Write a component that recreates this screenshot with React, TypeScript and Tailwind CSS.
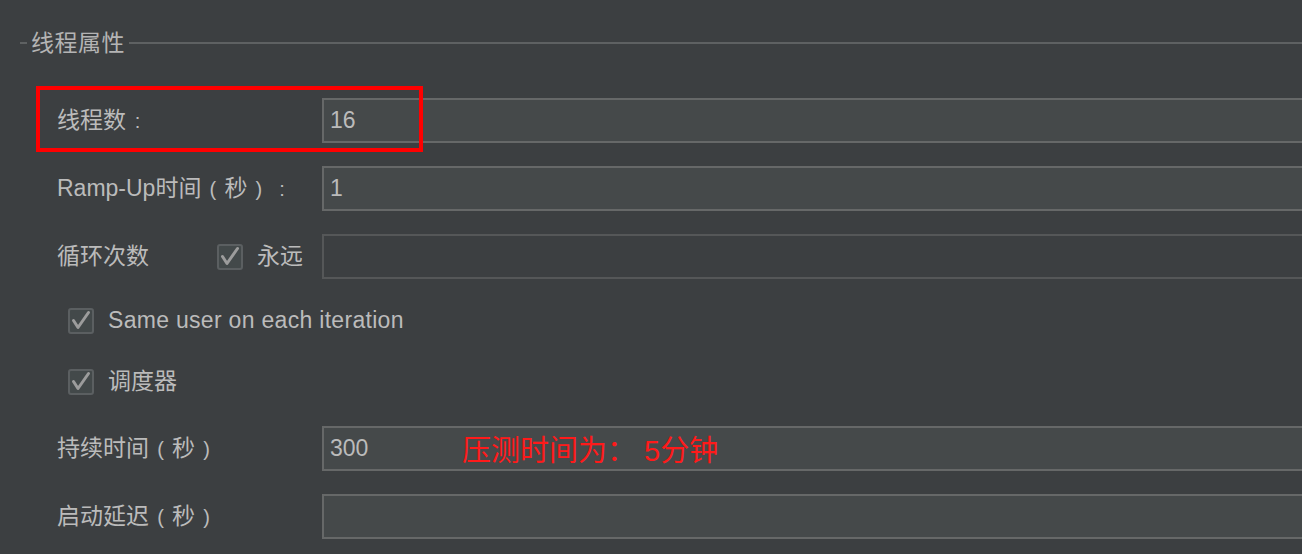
import React from 'react';

const FONT = { fontFamily: '"Liberation Sans", "Noto Sans CJK SC", sans-serif' };

// full-width punctuation rendered centred in a 23px cell, as the mac UI shows it
function P({ c }: { c: string }) {
  return <span className="inline-block w-[23px] text-center text-[20px]">{c}</span>;
}

function Check() {
  return (
    <span className="flex h-[26px] w-[26px] shrink-0 items-center justify-center rounded-[3px] border-2 border-[#5b5f61] bg-[#43494a]">
      <svg width="22" height="22" viewBox="0 0 22 22" fill="none">
        <path d="M3.5 10.5 L8 17.5 L18.5 2.5" stroke="#9c9c9c" strokeWidth="3" strokeLinecap="round" strokeLinejoin="round" />
      </svg>
    </span>
  );
}

function Field({ value, disabled, children }: { value?: string; disabled?: boolean; children?: React.ReactNode }) {
  return (
    <div
      className={`relative mr-[-8px] flex h-[45px] flex-1 items-center border-2 pl-[6px] text-[23px] text-[#bbbbbb] ${
        disabled ? 'border-[#555758] bg-[#3c3f41]' : 'border-[#666868] bg-[#45494a]'
      }`}
    >
      {value}
      {children}
    </div>
  );
}

export default function App() {
  return (
    <div className="h-[554px] w-[1302px] overflow-hidden bg-[#3c3f41] pt-[28px] text-[#bbbbbb]" style={FONT}>
      {/* 线程属性 标题 */}
      <div className="flex h-[30px] items-center pl-[20px]">
        <div className="h-[2px] w-[7px] bg-[#5e6162]" />
        <span className="px-[4px] text-[23px] leading-none tracking-[0.5px] text-[#b4b4b4]">线程属性</span>
        <div className="h-[2px] flex-1 bg-[#5e6162]" />
      </div>

      {/* 线程数 */}
      <div className="relative mt-[40px] flex h-[45px] items-center">
        <div className="w-[322px] pl-[57px] text-[23px]">
          线程数<P c=":" />
        </div>
        <Field value="16" />
        <div className="absolute left-[36px] top-[-12px] h-[66px] w-[387px] border-4 border-[#ff0000]" />
      </div>

      {/* Ramp-Up */}
      <div className="mt-[23px] flex h-[45px] items-center">
        <div className="w-[322px] pl-[57px] text-[23px]">
          Ramp-Up时间<P c="(" />秒<P c=")" /><P c=":" />
        </div>
        <Field value="1" />
      </div>

      {/* 循环次数 */}
      <div className="mt-[23px] flex h-[45px] items-center">
        <div className="flex w-[322px] items-center pl-[57px] text-[23px]">
          <span className="w-[160px]">循环次数</span>
          <Check />
          <span className="ml-[14px]">永远</span>
        </div>
        <Field disabled />
      </div>

      {/* Same user */}
      <div className="mt-[19px] flex h-[45px] items-center gap-[14px] pl-[68px] text-[23px]">
        <Check />
        <span className="tracking-[0.3px]">Same user on each iteration</span>
      </div>

      {/* 调度器 */}
      <div className="mt-[16px] flex h-[45px] items-center gap-[14px] pl-[68px] text-[23px]">
        <Check />
        <span>调度器</span>
      </div>

      {/* 持续时间 */}
      <div className="mt-[22px] flex h-[45px] items-center">
        <div className="w-[322px] pl-[57px] text-[23px]">
          持续时间<P c="(" />秒<P c=")" />
        </div>
        <Field value="300">
          <span className="absolute left-[138px] top-[3px] text-[29px] leading-[40px] text-[#ff1a1a]">压测时间为： 5分钟</span>
        </Field>
      </div>

      {/* 启动延迟 */}
      <div className="mt-[23px] flex h-[45px] items-center">
        <div className="w-[322px] pl-[57px] text-[23px]">
          启动延迟<P c="(" />秒<P c=")" />
        </div>
        <Field />
      </div>
    </div>
  );
}
